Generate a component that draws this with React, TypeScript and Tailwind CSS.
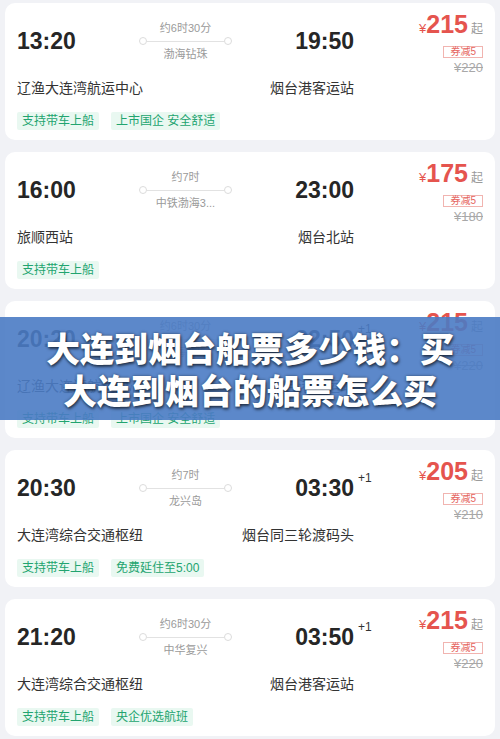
const TRIPS = [
  {
    dep: "13:20",
    arr: "19:50",
    nextDay: false,
    duration: "约6时30分",
    ship: "渤海钻珠",
    from: "辽渔大连湾航运中心",
    to: "烟台港客运站",
    price: 215,
    oldPrice: 220,
    tags: ["支持带车上船", "上市国企 安全舒适"],
  },
  {
    dep: "16:00",
    arr: "23:00",
    nextDay: false,
    duration: "约7时",
    ship: "中铁渤海3...",
    from: "旅顺西站",
    to: "烟台北站",
    price: 175,
    oldPrice: 180,
    tags: ["支持带车上船"],
  },
  {
    dep: "20:20",
    arr: "22:50",
    nextDay: true,
    duration: "约6时30分",
    ship: "渤海钻珠",
    from: "辽渔大连湾航运中心",
    to: "烟台港客运站",
    price: 215,
    oldPrice: 220,
    tags: ["支持带车上船", "上市国企 安全舒适"],
  },
  {
    dep: "20:30",
    arr: "03:30",
    nextDay: true,
    duration: "约7时",
    ship: "龙兴岛",
    from: "大连湾综合交通枢纽",
    to: "烟台同三轮渡码头",
    price: 205,
    oldPrice: 210,
    tags: ["支持带车上船", "免费延住至5:00"],
  },
  {
    dep: "21:20",
    arr: "03:50",
    nextDay: true,
    duration: "约6时30分",
    ship: "中华复兴",
    from: "大连湾综合交通枢纽",
    to: "烟台港客运站",
    price: 215,
    oldPrice: 220,
    tags: ["支持带车上船", "央企优选航班"],
  },
];

type Trip = (typeof TRIPS)[number];

function TripCard({ trip }: { trip: Trip }) {
  return (
    <article className="h-[137px] rounded-[10px] bg-white px-3 pt-[8px]">
      {/* Times + price */}
      <div className="flex h-[60px] items-stretch">
        <div className="flex w-[122px] items-center">
          <span className="text-[23px] font-bold leading-none text-[#262626]">{trip.dep}</span>
        </div>

        <div className="flex w-[93px] flex-col items-center justify-center">
          <span className="text-[11px] leading-[14px] text-[#9a9a9a]">{trip.duration}</span>
          <div className="my-[2px] flex h-[8px] w-full items-center">
            <span className="size-[8px] shrink-0 rounded-full border border-[#dcdcdc] bg-white" />
            <span className="h-px flex-1 bg-[#e2e2e2]" />
            <span className="size-[8px] shrink-0 rounded-full border border-[#dcdcdc] bg-white" />
          </div>
          <span className="text-[11px] leading-[14px] text-[#9a9a9a]">{trip.ship}</span>
        </div>

        <div className="flex w-[122px] items-center justify-end">
          <span className="relative text-[23px] font-bold leading-none text-[#262626]">
            {trip.arr}
            {trip.nextDay && (
              <span className="absolute -top-[5px] left-full ml-[4px] text-[12px] font-normal text-[#333]">+1</span>
            )}
          </span>
        </div>

        <div className="flex flex-1 flex-col items-end">
          <div className="flex items-baseline leading-[26px]">
            <span className="text-[13px] text-[#e5544e]">¥</span>
            <span className="text-[25px] font-bold text-[#e5544e]">{trip.price}</span>
            <span className="ml-[3px] text-[12px] text-[#9a9a9a]">起</span>
          </div>
          <span className="mt-[4px] flex h-[14px] items-center border border-[#f1b4b0] px-[6px] text-[10px] leading-none text-[#e5645e]">
            券减5
          </span>
          <span className="mt-[2px] text-[13px] leading-[15px] text-[#a8a8a8] line-through">¥{trip.oldPrice}</span>
        </div>
      </div>

      {/* Stations */}
      <div className="mt-[7px] flex text-[14px] leading-[20px] text-[#333]">
        <span className="w-[215px]">{trip.from}</span>
        <span className="w-[122px] text-right">{trip.to}</span>
      </div>

      {/* Tags */}
      <div className="mt-[14px] flex gap-3">
        {trip.tags.map((t) => (
          <span
            key={t}
            className="flex h-[18px] items-center rounded-[2px] bg-[#e9f8f1] px-[5px] text-[12px] leading-none text-[#22a46f]"
          >
            {t}
          </span>
        ))}
      </div>
    </article>
  );
}

export default function App() {
  return (
    <main
      className="relative min-h-[739px] w-[500px] overflow-hidden bg-[#f1f2f6] px-[5px] pt-[3px]"
      style={{ fontFamily: '"Liberation Sans", "Noto Sans CJK SC", sans-serif' }}
    >
      <div className="flex flex-col gap-[12px]">
        {TRIPS.map((trip, i) => (
          <TripCard key={i} trip={trip} />
        ))}
      </div>

      {/* Title banner over the list */}
      <div className="absolute inset-x-0 top-[317px] flex h-[103px] items-center justify-center bg-[#4a7bc4]/90">
        <h1
          className="w-[420px] text-center text-[34px] font-black leading-[42px] text-white [text-shadow:0_0_3px_rgba(0,0,0,0.45),1px_2px_3px_rgba(0,0,0,0.55)]"
          style={{ fontFamily: '"Noto Sans CJK SC", sans-serif' }}
        >
          大连到烟台船票多少钱：买大连到烟台的船票怎么买
        </h1>
      </div>
    </main>
  );
}
